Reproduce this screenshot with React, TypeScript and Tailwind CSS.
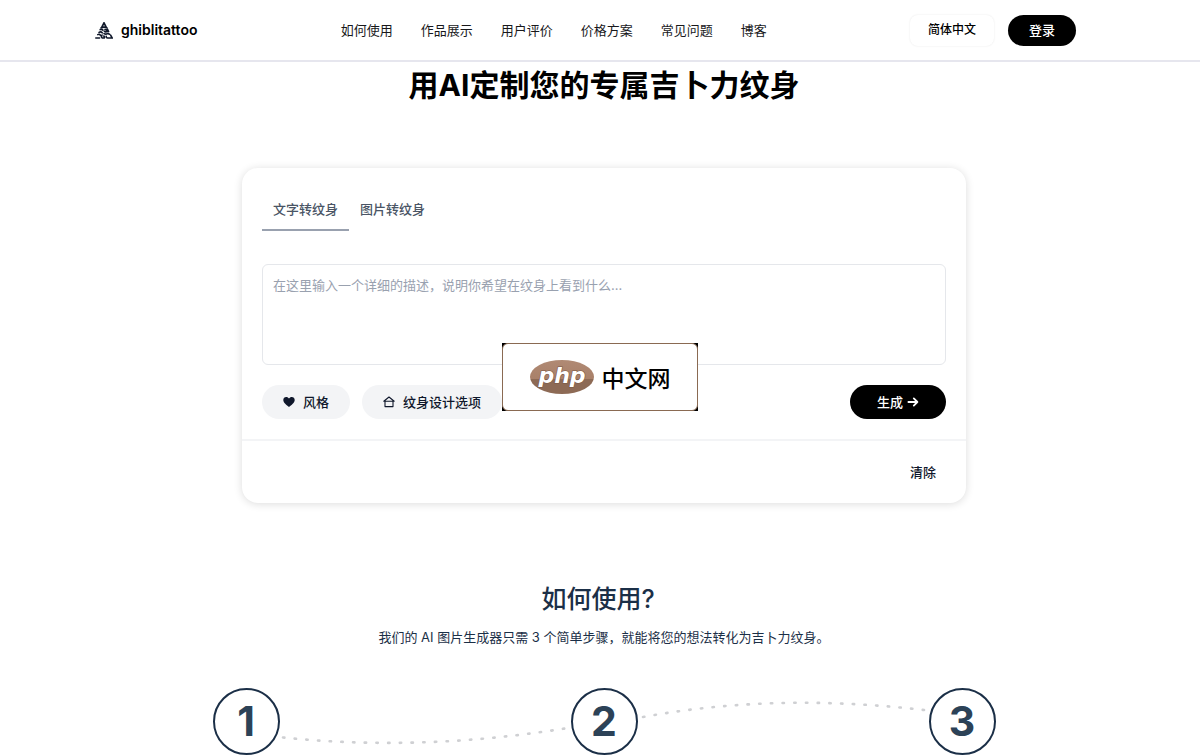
import { useState } from "react";

const NAV_LINKS = ["如何使用", "作品展示", "用户评价", "价格方案", "常见问题", "博客"];
const TABS = ["文字转纹身", "图片转纹身"];

function LogoMark() {
  return (
    <svg viewBox="0 0 18 17" className="h-[17px] w-[18px]" fill="none" aria-hidden="true">
      <path
        d="M9 0.8 L6.6 5.6 M9 0.8 L11.4 5.6 M6.2 5.8 Q9 4.6 11.8 5.8"
        stroke="#0f172a"
        strokeWidth="1.7"
        strokeLinecap="round"
      />
      <path
        d="M5.2 7.6 Q7 6.8 8 8.2 M12.4 7 L13.6 9.6 M10 7.6 Q11.6 7.4 12.2 9.2 Q10.8 10.6 9.4 9.4 M4 10.4 Q6 9.2 7.2 10.8 M9 11.6 Q11 12.8 12.6 11.4 L14.6 12.2"
        stroke="#0f172a"
        strokeWidth="1.6"
        strokeLinecap="round"
      />
      <path
        d="M2.8 12.6 Q4.6 11.6 5.4 13.4 M0.8 16 H4.6 M7 13 Q6 15 7.2 16 H9.2 Q9.6 14.6 8.8 14 M11.2 14.2 Q11 16 12.6 16 H17.2 L15.6 13.2"
        stroke="#0f172a"
        strokeWidth="1.6"
        strokeLinecap="round"
      />
    </svg>
  );
}

function HeartIcon() {
  return (
    <svg viewBox="0 0 12 12" className="size-3" fill="currentColor" aria-hidden="true">
      <path d="M6 11 C3.6 9.3 0.3 6.8 0.3 4.1 C0.3 2.3 1.6 1 3.2 1 C4.4 1 5.4 1.6 6 2.5 C6.6 1.6 7.6 1 8.8 1 C10.4 1 11.7 2.3 11.7 4.1 C11.7 6.8 8.4 9.3 6 11 Z" />
    </svg>
  );
}

function HouseIcon() {
  return (
    <svg
      viewBox="0 0 12 12"
      className="size-3"
      fill="none"
      stroke="currentColor"
      strokeWidth="1.1"
      strokeLinejoin="round"
      strokeLinecap="round"
      aria-hidden="true"
    >
      <path d="M0.8 5.2 L6 1 L11.2 5.2 Z" />
      <path d="M2 5.2 V10.6 H10 V5.2" />
    </svg>
  );
}

function ArrowIcon() {
  return (
    <svg
      viewBox="0 0 12 12"
      className="size-3"
      fill="none"
      stroke="currentColor"
      strokeWidth="1.8"
      strokeLinecap="round"
      strokeLinejoin="round"
      aria-hidden="true"
    >
      <path d="M1.4 6 H10.4 M6.8 2.4 L10.4 6 L6.8 9.6" />
    </svg>
  );
}

function StepCircle({ n }: { n: number }) {
  return (
    <li className="flex size-[67px] shrink-0 items-center justify-center rounded-full border-2 border-[#1b2f47] text-[41px] leading-none font-bold text-[#2c4257]">
      {n}
    </li>
  );
}

function DottedPath({ d }: { d: string }) {
  return (
    <li aria-hidden="true" className="min-w-0 flex-1">
      <svg viewBox="0 0 291 67" preserveAspectRatio="none" className="h-[67px] w-full" fill="none">
        <path d={d} stroke="#cfd0d3" strokeWidth="2.6" strokeLinecap="round" strokeDasharray="1.4 10.3" />
      </svg>
    </li>
  );
}

function Watermark() {
  return (
    <div className="absolute top-[343px] left-1/2 -translate-x-1/2 bg-black">
      <div className="flex h-[68px] w-[196px] items-center justify-center gap-2 rounded-md border border-[#8a6a52] bg-white">
        <svg viewBox="0 0 64 36" className="h-9 w-16" aria-label="php">
          <defs>
            <linearGradient id="oval" x1="0" y1="0" x2="0" y2="1">
              <stop offset="0" stopColor="#b08a74" />
              <stop offset="0.56" stopColor="#a98069" />
              <stop offset="0.56" stopColor="#8d6a55" />
              <stop offset="1" stopColor="#8d6a55" />
            </linearGradient>
          </defs>
          <ellipse cx="32" cy="18" rx="32" ry="17" fill="url(#oval)" />
          <text
            x="32"
            y="24"
            textAnchor="middle"
            fontFamily="DejaVu Sans, sans-serif"
            fontSize="22"
            fontWeight="700"
            fontStyle="italic"
            fill="#fff"
            stroke="#7a5744"
            strokeWidth="1.2"
            paintOrder="stroke"
          >
            php
          </text>
        </svg>
        <span className="pt-1 text-[23px] leading-8 font-medium text-black">中文网</span>
      </div>
    </div>
  );
}

export default function App() {
  const [tab, setTab] = useState(0);
  const [prompt, setPrompt] = useState("");

  return (
    <div className="relative bg-white font-['Inter','Noto_Sans_CJK_SC',sans-serif] text-[13px] leading-5 text-slate-900">
      <header className="border-b-2 border-[#e6e6ee]">
        <div className="flex h-[60px] items-center justify-between pr-[124px] pl-[95px]">
          <a href="#" className="flex items-center gap-2 text-sm font-semibold text-black">
            <LogoMark />
            ghiblitattoo
          </a>
          <nav className="flex gap-7">
            {NAV_LINKS.map((label) => (
              <a key={label} href="#" className="text-[#18181b]">
                {label}
              </a>
            ))}
          </nav>
          <div className="flex items-center gap-[14px]">
            <button className="h-[31px] rounded-lg px-[18px] text-xs font-medium text-black shadow-[0_0_2px_rgba(0,0,0,0.1)]">
              简体中文
            </button>
            <button className="h-[31px] rounded-full bg-black px-[21px] font-medium text-white">登录</button>
          </div>
        </div>
      </header>

      <main className="pl-2">
        <h1 className="pt-[3px] text-center text-[30px] leading-10 font-bold text-black">用AI定制您的专属吉卜力纹身</h1>

        <section className="mx-auto mt-[63px] w-full max-w-[724px] rounded-2xl bg-white shadow-[0_1px_8px_rgba(0,0,0,0.14)]">
          <div className="p-5">
            <div role="tablist" className="flex">
              {TABS.map((label, i) => (
                <button
                  key={label}
                  role="tab"
                  aria-selected={tab === i}
                  onClick={() => setTab(i)}
                  className={`h-[43px] border-b-2 px-[11px] font-medium text-gray-600 ${
                    tab === i ? "border-gray-400" : "border-transparent"
                  }`}
                >
                  {label}
                </button>
              ))}
            </div>

            <textarea
              aria-label="描述"
              value={prompt}
              onChange={(e) => setPrompt(e.target.value)}
              placeholder="在这里输入一个详细的描述，说明你希望在纹身上看到什么..."
              className="mt-[33px] block h-[101px] w-full resize-none rounded-md border border-gray-200 p-[10px] placeholder:text-gray-400"
            />

            <div className="mt-5 flex items-center gap-3 font-medium">
              <button className="flex h-[34px] items-center gap-2 rounded-full bg-gray-100 px-[21px]">
                <HeartIcon />
                风格
              </button>
              <button className="flex h-[34px] items-center gap-2 rounded-full bg-gray-100 px-[21px]">
                <HouseIcon />
                纹身设计选项
              </button>
              <button className="ml-auto flex h-[34px] items-center gap-1 rounded-full bg-black px-[27px] text-white">
                生成
                <ArrowIcon />
              </button>
            </div>
          </div>
          <div className="flex h-16 items-center justify-end border-t-2 border-gray-100 px-5">
            <button className="px-[10px] py-1 font-medium">清除</button>
          </div>
        </section>

        <section className="mt-[78px]">
          <h2 className="pr-3 text-center text-[25px] leading-9 font-medium text-[#1b2f47]">如何使用?</h2>
          <p className="mt-[10px] text-center text-[#1b2f47]">
            我们的 AI 图片生成器只需 3 个简单步骤，就能将您的想法转化为吉卜力纹身。
          </p>
          <ol className="mx-auto mt-[41px] flex w-full max-w-[783px]">
            <StepCircle n={1} />
            <DottedPath d="M3 49.5 C95 59 190 56 288 40" />
            <StepCircle n={2} />
            <DottedPath d="M5 29 C98 12 190 11 286 22" />
            <StepCircle n={3} />
          </ol>
        </section>
      </main>

      <Watermark />
    </div>
  );
}
